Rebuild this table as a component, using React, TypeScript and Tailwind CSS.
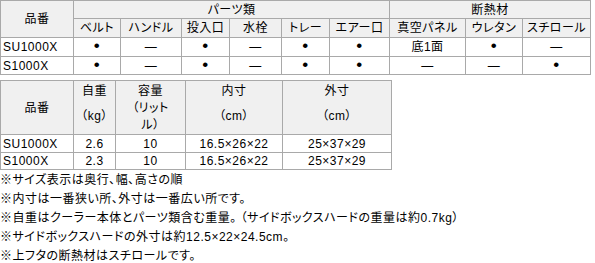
import React from "react";

const B = () => <span className="text-[17px] leading-[0]">•</span>;
const D = () => <span>—</span>;

const th = "border border-[#a9a9a9] bg-[#f0f0f0] font-normal p-0 text-center";
const td = "border border-[#a9a9a9] bg-white p-0 text-center";
const tdL = "border border-[#a9a9a9] bg-white p-0 pl-[2px] text-left";

export default function App() {
  const rows1: [string, React.ReactNode[]][] = [
    ["SU1000X", [<B />, <D />, <B />, <D />, <B />, <B />, "底1面", <B />, <D />]],
    ["S1000X", [<B />, <D />, <B />, <D />, <B />, <B />, <D />, <D />, <B />]],
  ];
  const rows2 = [
    ["SU1000X", "2.6", "10", "16.5×26×22", "25×37×29"],
    ["S1000X", "2.3", "10", "16.5×26×22", "25×37×29"],
  ];
  return (
    <div className="w-[595px] h-[263px] bg-white text-black text-[12px] leading-[16px] tracking-[0.5px] font-['Liberation_Sans','Noto_Sans_CJK_JP',sans-serif] [font-feature-settings:'palt'] overflow-hidden">
      <table className="border-collapse table-fixed w-[590px]">
        <colgroup>
          <col className="w-[73px]" />
          <col className="w-[47px]" />
          <col className="w-[61px]" />
          <col className="w-[48px]" />
          <col className="w-[52px]" />
          <col className="w-[48px]" />
          <col className="w-[60px]" />
          <col className="w-[76px]" />
          <col className="w-[57px]" />
          <col className="w-[68px]" />
        </colgroup>
        <thead>
          <tr className="h-[18px]">
            <th rowSpan={2} className={th}>品番</th>
            <th colSpan={6} className={th}>パーツ類</th>
            <th colSpan={3} className={th}>断熱材</th>
          </tr>
          <tr className="h-[19px]">
            {["ベルト", "ハンドル", "投入口", "水栓", "トレー", "エアー口", "真空パネル", "ウレタン", "スチロール"].map((h) => (
              <th key={h} className={th}>{h}</th>
            ))}
          </tr>
        </thead>
        <tbody>
          {rows1.map(([name, cells], i) => (
            <tr key={name} className={i === 0 ? "h-[19px]" : "h-[18px]"}>
              <td className={tdL}>{name}</td>
              {cells.map((c, j) => (
                <td key={j} className={td}>{c}</td>
              ))}
            </tr>
          ))}
        </tbody>
      </table>

      <table className="border-collapse table-fixed w-[391px] mt-[5px]">
        <colgroup>
          <col className="w-[73px]" />
          <col className="w-[42px]" />
          <col className="w-[70px]" />
          <col className="w-[97px]" />
          <col className="w-[109px]" />
        </colgroup>
        <thead>
          <tr className="h-[50px]">
            <th className={th + " align-middle"}>品番</th>
            <th className={th + " align-top pt-[2px] leading-[17px]"}>
              自重
              <div className="mt-[8px]">（kg）</div>
            </th>
            <th className={th + " align-top pt-[2px] leading-[17px]"}>
              容量
              <br />
              （リット
              <br />
              ル）
            </th>
            <th className={th + " align-top pt-[2px] leading-[17px]"}>
              内寸
              <div className="mt-[8px]">（cm）</div>
            </th>
            <th className={th + " align-top pt-[2px] leading-[17px]"}>
              外寸
              <div className="mt-[8px]">（cm）</div>
            </th>
          </tr>
        </thead>
        <tbody>
          {rows2.map((r, i) => (
            <tr key={r[0]} className={i === 0 ? "h-[18px]" : "h-[17px]"}>
              <td className={tdL}>{r[0]}</td>
              {r.slice(1).map((c, j) => (
                <td key={j} className={td}>{c}</td>
              ))}
            </tr>
          ))}
        </tbody>
      </table>

      <div className="mt-[1px] leading-[19px]">
        <p>※サイズ表示は奥行、幅、高さの順</p>
        <p>※内寸は一番狭い所、外寸は一番広い所です。</p>
        <p>※自重はクーラー本体とパーツ類含む重量。 （サイドボックスハードの重量は約0.7kg）</p>
        <p>※サイドボックスハードの外寸は約12.5×22×24.5cm。</p>
        <p>※上フタの断熱材はスチロールです。</p>
      </div>
    </div>
  );
}
